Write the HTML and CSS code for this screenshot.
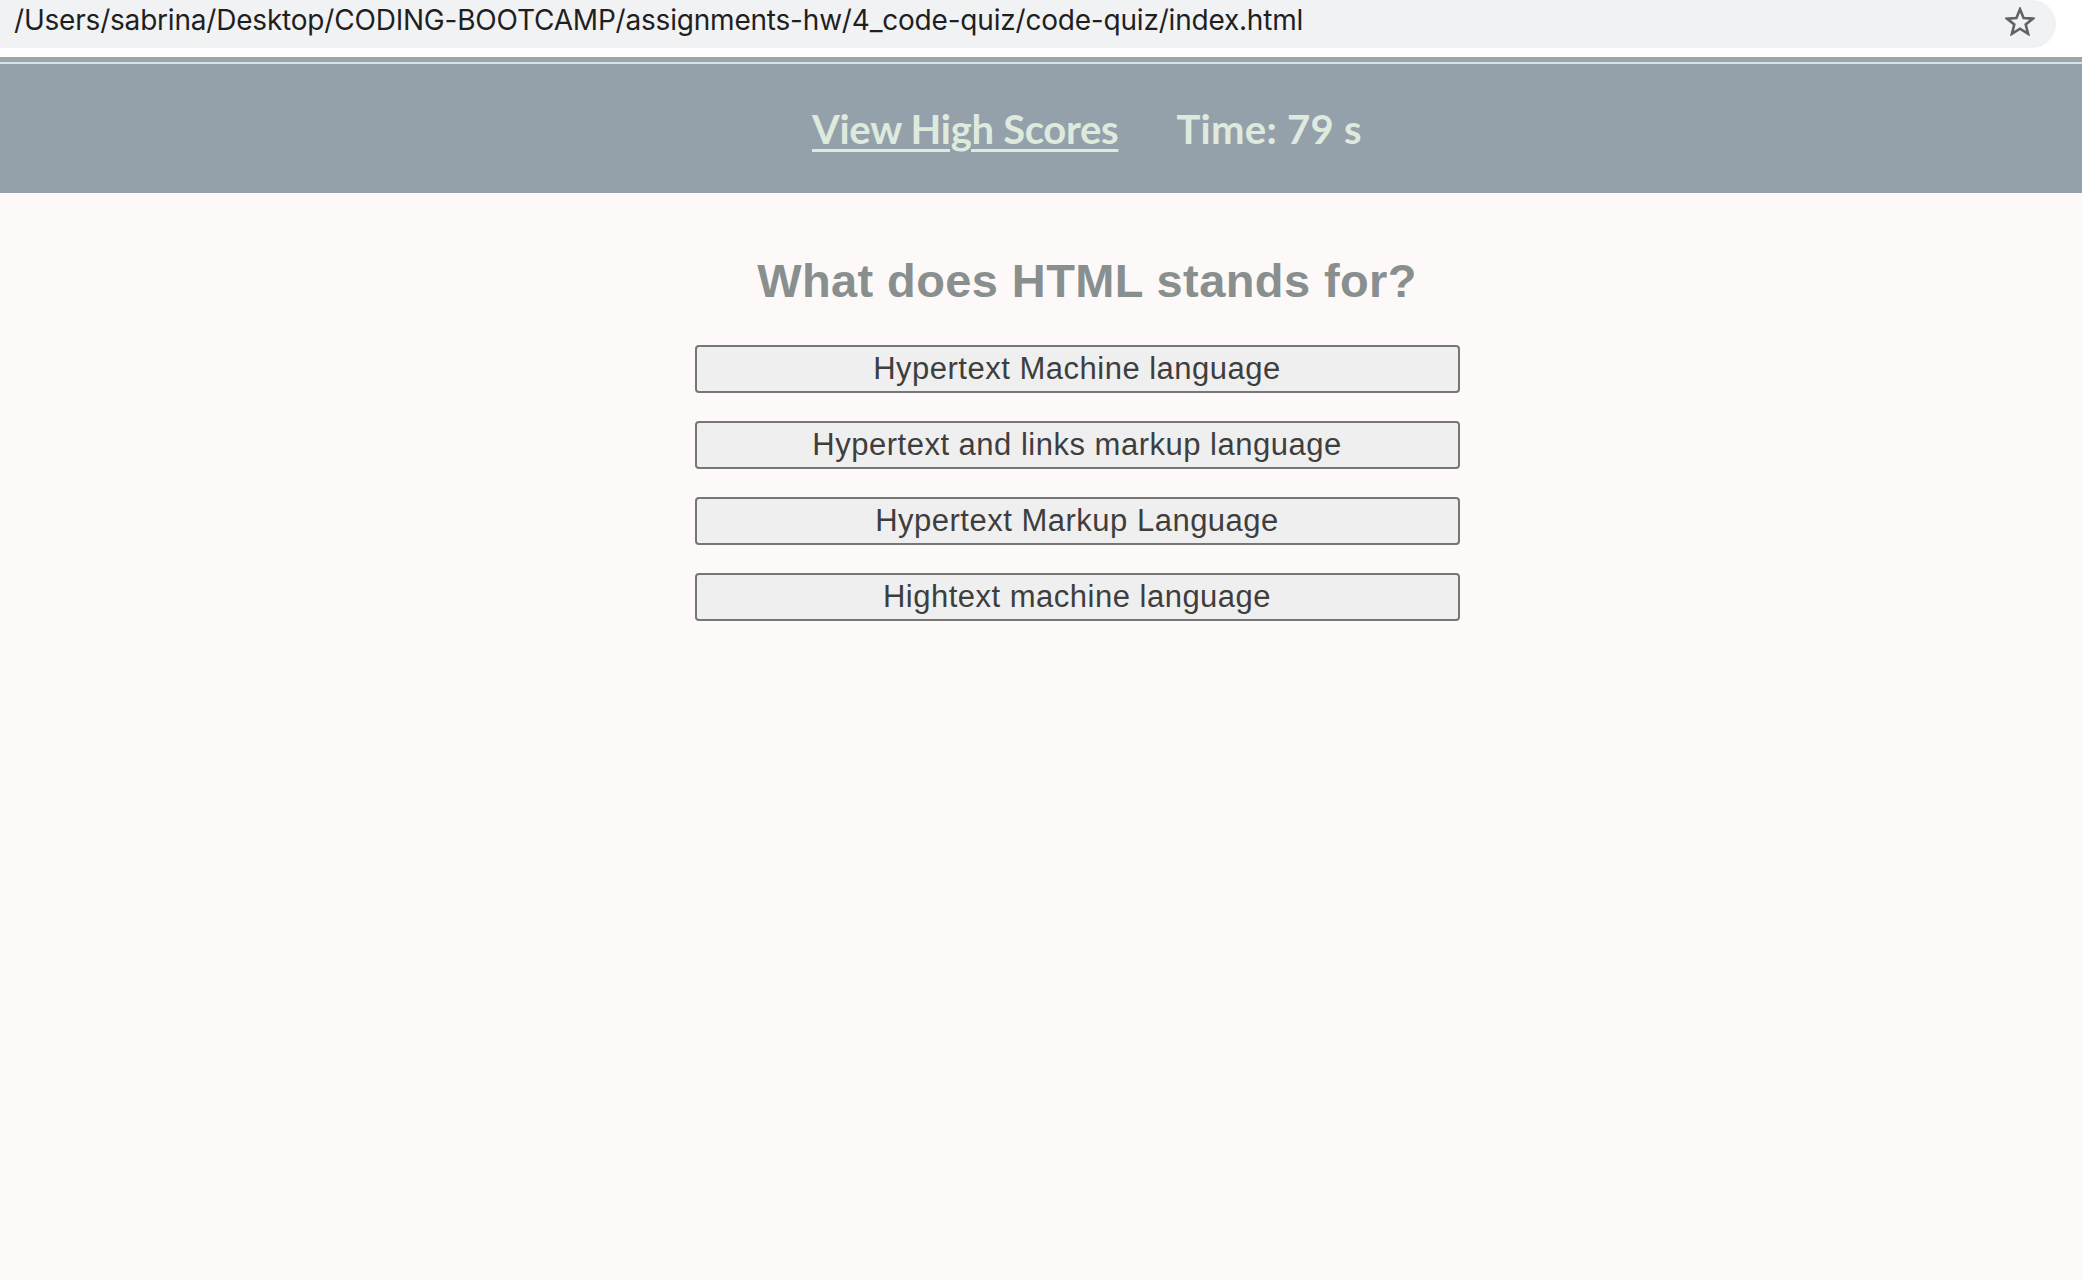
FILE: index.html
```html
<!DOCTYPE html>
<html lang="en">
<head>
<meta charset="utf-8">
<title>Code Quiz</title>
<link rel="stylesheet" href="styles.css">
</head>
<body>
<div class="chrome">
  <div class="omnibox">
    <span class="url">/Users/sabrina/Desktop/CODING-BOOTCAMP/assignments-hw/4_code-quiz/code-quiz/index.html</span>
    <svg class="star" width="30" height="29" viewBox="0 0 30 29" aria-hidden="true">
      <path d="M15 2.2 L18.6 11.1 L28 11.6 L20.7 17.6 L23.1 26.8 L15 21.7 L6.9 26.8 L9.3 17.6 L2 11.6 L11.4 11.1 Z" fill="none" stroke="#5f6368" stroke-width="2.6" stroke-linejoin="miter"/>
    </svg>
  </div>
</div>
<div class="chrome-gap"></div>
<div class="rule-dark"></div>
<div class="rule-light"></div>
<header class="topbar">
  <div class="topbar-inner">
    <a class="scores-link" href="#">View High Scores</a>
    <span class="timer">Time: 79 s</span>
  </div>
</header>
<main class="quiz">
  <h1 class="question">What does HTML stands for?</h1>
  <div class="choices">
    <button class="choice">Hypertext Machine language</button>
    <button class="choice">Hypertext and links markup language</button>
    <button class="choice">Hypertext Markup Language</button>
    <button class="choice">Hightext machine language</button>
  </div>
</main>
</body>
</html>
```
FILE: styles.css
```css
html, body {
  margin: 0;
  padding: 0;
}
body {
  background: #fdf9f8;
  min-height: 1280px;
  font-family: "Liberation Sans", Arial, sans-serif;
}
.chrome {
  background: #ffffff;
  height: 48px;
}
.omnibox {
  width: 2056px;
  height: 48px;
  box-sizing: border-box;
  background: #f1f2f4;
  border-radius: 0 24px 24px 0;
  display: flex;
  align-items: center;
  justify-content: space-between;
  padding: 0 21px 0 14px;
}
.url {
  font-family: Inter, "Noto Sans", sans-serif;
  font-size: 28px;
  color: #1f1f1f;
  letter-spacing: -0.2px;
  margin-bottom: 8px;
}
.star {
  display: block;
  margin-bottom: 6px;
}
.chrome-gap {
  height: 9px;
  background: #ffffff;
}
.rule-dark {
  height: 5px;
  background: #9ea4a8;
}
.rule-light {
  height: 2px;
  background: #d3e3ee;
}
.topbar {
  background: #95a1aa;
  height: 129px;
  display: flex;
  align-items: center;
  justify-content: center;
}
.topbar-inner {
  display: flex;
  align-items: center;
  gap: 58px;
  padding-left: 92px;
  font-family: Lato, "Open Sans", sans-serif;
  font-weight: bold;
  font-size: 40px;
  color: #dfeadf;
}
.scores-link {
  color: #dfeadf;
  text-decoration: underline;
  text-decoration-thickness: 3px;
  text-underline-offset: 5px;
  letter-spacing: -0.3px;
}
.timer {
  letter-spacing: 0.3px;
}
.quiz {
  display: flex;
  flex-direction: column;
  align-items: center;
  padding-left: 72px;
}
.question {
  margin: 65px 0 42px 20px;
  font-size: 47px;
  line-height: 45px;
  letter-spacing: 0.4px;
  font-weight: bold;
  color: #888f8e;
}
.choices {
  display: flex;
  flex-direction: column;
  gap: 28px;
  width: 765px;
}
.choice {
  height: 48px;
  box-sizing: border-box;
  background: #efefef;
  border: 2px solid #767676;
  border-radius: 4px;
  color: #3e3e3e;
  font-family: "Liberation Sans", Arial, sans-serif;
  font-size: 31px;
  letter-spacing: 0.5px;
  padding: 0;
  cursor: pointer;
}
```
